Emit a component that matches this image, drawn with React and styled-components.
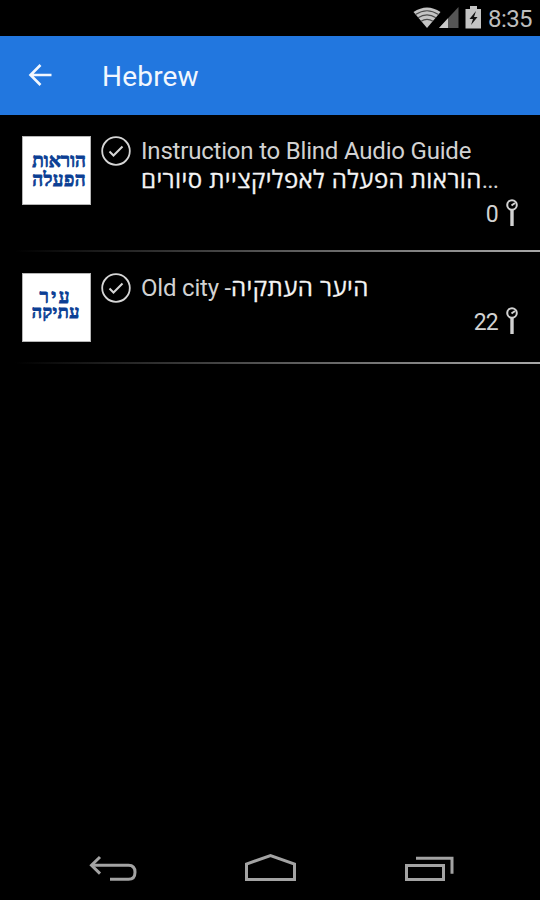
import React from 'react';
import styled, { createGlobalStyle } from 'styled-components';

const GlobalStyle = createGlobalStyle`
  * {
    box-sizing: border-box;
  }

  body {
    margin: 0;
    background: #000000;
    font-family: Roboto, 'Open Sans', sans-serif;
  }
`;

const Screen = styled.div`
  width: 540px;
  height: 900px;
  display: flex;
  flex-direction: column;
  background: #000000;
  color: #d2d2d2;
  overflow: hidden;
`;

const StatusBar = styled.div`
  height: 36px;
  flex-shrink: 0;
  display: flex;
  justify-content: flex-end;
  align-items: center;
  padding-right: 8px;
`;

const StatusIcons = styled.svg`
  width: 70px;
  height: 36px;
  margin-right: 5px;
`;

const Clock = styled.span`
  font-size: 24px;
  line-height: 36px;
  letter-spacing: -0.6px;
  color: #bdbdbd;
  padding-top: 2px;
`;

const AppBar = styled.header`
  height: 79px;
  flex-shrink: 0;
  display: flex;
  align-items: center;
  padding-left: 27px;
  background: #2277df;
`;

const BackIcon = styled.svg`
  width: 26px;
  height: 26px;
  margin-top: -2px;
`;

const AppTitle = styled.h1`
  margin: 2px 0 0 49px;
  font-size: 28px;
  font-weight: 400;
  line-height: 36px;
  letter-spacing: 0.2px;
  color: #f2f7fe;
`;

const GuideList = styled.ul`
  flex: 1;
  margin: 0;
  padding: 0;
  list-style: none;
`;

const GuideItem = styled.li`
  display: flex;
  height: ${props => props.$height}px;
  padding: 21px 21px 0 22px;
  border-bottom: 2px solid;
  border-image: linear-gradient(to right, #000000 3%, #555555 50%, #a8a8a8 100%) 1;
`;

const Thumb = styled.div`
  width: 69px;
  height: 69px;
  flex-shrink: 0;
  display: flex;
  flex-direction: column;
  align-items: flex-start;
  padding-top: ${props => props.$top}px;
  background: #ffffff;
  border: 1px solid #b5b5b5;
  color: #0b3f94;
  direction: rtl;
  font-family: 'Liberation Serif', serif;
  font-weight: 700;
  white-space: nowrap;
`;

const ThumbLine = styled.span`
  height: ${props => props.$height}px;
  line-height: ${props => props.$height}px;
  font-size: ${props => props.$size}px;
  letter-spacing: ${props => props.$spacing || 0}px;
  margin-right: ${props => props.$inset}px;
  -webkit-text-stroke: 0.8px #0b3f94;
`;

const CheckIcon = styled.svg`
  width: 30px;
  height: 30px;
  margin-left: 10px;
  flex-shrink: 0;
`;

const Details = styled.div`
  flex: 1;
  min-width: 0;
  margin-left: 10px;
`;

const Title = styled.div`
  font-size: 24px;
  font-weight: 400;
  line-height: 28px;
  padding-top: 1px;
  white-space: nowrap;
  letter-spacing: -0.2px;
`;

const Subtitle = styled(Title)`
  letter-spacing: -0.8px;
`;

const Hebrew = styled.span`
  font-family: 'Open Sans', sans-serif;
  font-size: 24px;
  font-weight: 500;
  line-height: 1;
  color: #f4f4f4;
  letter-spacing: ${props => props.$spacing}px;
  -webkit-text-stroke: 0.3px #f4f4f4;
`;

const StopCount = styled.div`
  display: flex;
  justify-content: flex-end;
  align-items: center;
  height: 30px;
  margin-top: 5px;
  font-size: 23px;
  font-weight: 400;
  letter-spacing: -0.8px;
`;

const PinIcon = styled.svg`
  width: 14px;
  height: 30px;
  margin: -3px 0 0 7px;
`;

const NavBar = styled.nav`
  height: 60px;
  flex-shrink: 0;
`;

const NavIcons = styled.svg`
  display: block;
  width: 540px;
  height: 60px;
`;

const guides = [
  {
    height: 137,
    thumbTop: 14,
    thumb: [
      { text: 'הוראות', size: 19, height: 19, inset: 4 },
      { text: 'הפעלה', size: 19, height: 19, inset: 4, spacing: 0.4 },
    ],
    title: 'Instruction to Blind Audio Guide',
    subtitle: 'הוראות הפעלה לאפליקציית סיורים',
    stops: 0,
  },
  {
    height: 112,
    thumbTop: 15,
    thumb: [
      { text: 'עיר', size: 19, height: 15, inset: 18, spacing: 2.5 },
      { text: 'עתיקה', size: 18, height: 16, inset: 10, spacing: 0.5 },
    ],
    title: 'Old city -',
    hebrewTitle: 'היער העתקיה',
    stops: 22,
  },
];

const Guide = ({ guide }) => (
  <GuideItem $height={guide.height}>
    <Thumb $top={guide.thumbTop}>
      {guide.thumb.map(line => (
        <ThumbLine
          key={line.text}
          $size={line.size}
          $height={line.height}
          $inset={line.inset}
          $spacing={line.spacing}
        >
          {line.text}
        </ThumbLine>
      ))}
    </Thumb>
    <CheckIcon viewBox="0 0 30 30" fill="none" stroke="#d6d6d6">
      <circle cx="15" cy="15" r="13.8" strokeWidth="1.8" />
      <path d="M8.500 15.500l4 4 9-9" strokeWidth="2" />
    </CheckIcon>
    <Details>
      <Title>
        {guide.title}
        {guide.hebrewTitle && <Hebrew $spacing={0.45}>{guide.hebrewTitle}</Hebrew>}
      </Title>
      {guide.subtitle && (
        <Subtitle>
          <Hebrew $spacing={0.42}>{guide.subtitle}</Hebrew>...
        </Subtitle>
      )}
      <StopCount>
        {guide.stops}
        <PinIcon viewBox="0 0 14 30" fill="none" stroke="#d2d2d2">
          <circle cx="7" cy="7" r="4.800" strokeWidth="2" />
          <path d="M7 11v17" strokeWidth="3.400" />
          <path d="M6.500 7.500l3.500-2.500" strokeWidth="2" />
        </PinIcon>
      </StopCount>
    </Details>
  </GuideItem>
);

const App = () => (
  <>
    <GlobalStyle />
    <Screen>
      <StatusBar>
        <StatusIcons viewBox="412 0 70 36">
          {/* wifi */}
          <path d="M412.500 12Q426 3 439.500 12L426 28z" fill="#c4c4c4" />
          <g fill="none" stroke="#4a4a4a" strokeWidth="1.2">
            <path d="M414.500 14.500q11.500-7.500 23 0" />
            <path d="M417 17.800q9-6 18 0" />
            <path d="M420 21.300q6-4 12 0" />
          </g>
          {/* signal */}
          <path d="M457.500 7v21h-19.500z" fill="#555555" />
          <path d="M447 18.300v9.700h-9z" fill="#c9c9c9" />
          {/* battery */}
          <path d="M469 6h7v3h4v19.500h-15.500v-19.500h4.500z" fill="#c4c4c4" />
          <path d="M475 11l-6.500 8h3.500l-2 6 6.500-8h-3.500z" fill="#111111" />
        </StatusIcons>
        <Clock>8:35</Clock>
      </StatusBar>
      <AppBar>
        <BackIcon viewBox="0 0 26 26" fill="none" stroke="#f2f7fe" strokeWidth="2.6">
          <path d="M24.500 13H4M13.500 3L3.500 13l10 10" />
        </BackIcon>
        <AppTitle>Hebrew</AppTitle>
      </AppBar>
      <GuideList>
        {guides.map(guide => (
          <Guide key={guide.title} guide={guide} />
        ))}
      </GuideList>
      <NavBar>
        <NavIcons viewBox="0 840 540 60" fill="none" stroke="#a3a3a3" strokeWidth="3">
          <path d="M92 865.300h36.500q6.500 0 6.500 7t-6.500 7H110" />
          <path d="M100 857l-8.500 8.300 8.500 8.300" />
          <path d="M246.500 879.500v-15.500l24-8.500 24 8.500v15.500z" />
          <path d="M406.500 865.500h37v14h-37z" />
          <path d="M416 858.300h36v15.500" />
        </NavIcons>
      </NavBar>
    </Screen>
  </>
);

export default App;
